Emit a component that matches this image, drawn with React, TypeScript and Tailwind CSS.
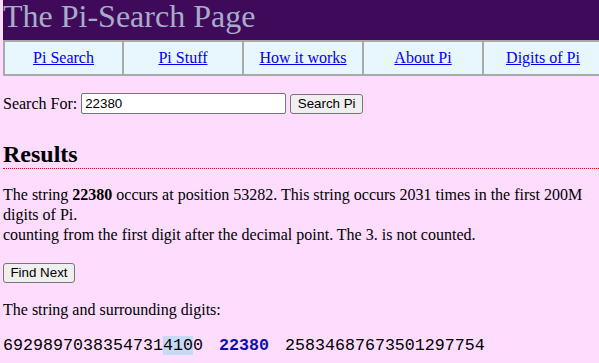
const navItems = ['Pi Search', 'Pi Stuff', 'How it works', 'About Pi', 'Digits of Pi']

export default function App() {
  return (
    <div className="min-h-[363px] w-[599px] overflow-hidden bg-[#fddcfe] pl-[3px] font-['Liberation_Serif',serif] text-[16px] text-black">
      {/* Title bar */}
      <div className="h-10 bg-[#400a5b]">
        <h1 className="text-[32px] leading-[32px] font-normal text-[#a6adc8]">The Pi-Search Page</h1>
      </div>

      {/* Nav table */}
      <div className="flex h-9 w-[600px] border border-[#a9a9a9] bg-[#e8f6fe]">
        {navItems.map((label, i) => (
          <div
            key={label}
            className={`flex shrink-0 items-center justify-center border border-[#a9a9a9] ${i === 0 ? 'w-[119px]' : 'w-[120px]'}`}
          >
            <a href="#" className="text-[#0000ee] underline">{label}</a>
          </div>
        ))}
      </div>

      {/* Search form */}
      <div className="mt-[17px] flex items-center">
        <span className="leading-[18px]">Search For:</span>
        <input
          defaultValue="22380"
          className="ml-[4px] h-[21px] w-[205px] rounded-[2px] border border-[#767676] bg-white px-[3px] font-['Liberation_Sans',sans-serif] text-[13.33px] text-black outline-none"
        />
        <button className="ml-[4px] h-5 w-[73px] rounded-[3px] border border-[#767676] bg-[#efefef] font-['Liberation_Sans',sans-serif] text-[13.33px] leading-none">
          Search Pi
        </button>
      </div>

      {/* Results */}
      <h2 className="mt-[26px] border-b border-dotted border-red-600 text-[24px] leading-[28px] font-bold">Results</h2>

      <p className="mt-4 leading-5">
        The string <b>22380</b> occurs at position 53282. This string occurs 2031 times in the first 200M digits of Pi.
        <br />
        counting from the first digit after the decimal point. The 3. is not counted.
      </p>

      <button className="mt-[18px] h-5 w-[72px] rounded-[3px] border border-[#767676] bg-[#efefef] font-['Liberation_Sans',sans-serif] text-[13.33px] leading-none">
        Find Next
      </button>

      <p className="mt-4 leading-5">The string and surrounding digits:</p>

      <p className="mt-4 whitespace-nowrap font-['Liberation_Mono',monospace] text-[16.67px] leading-5">
        <span>6929897038354731</span>
        <span className="bg-[#c6daf6]">410</span>
        <span>0</span>
        <b className="px-4 text-[#1010a8]">22380</b>
        <span>25834687673501297754</span>
      </p>
    </div>
  )
}
